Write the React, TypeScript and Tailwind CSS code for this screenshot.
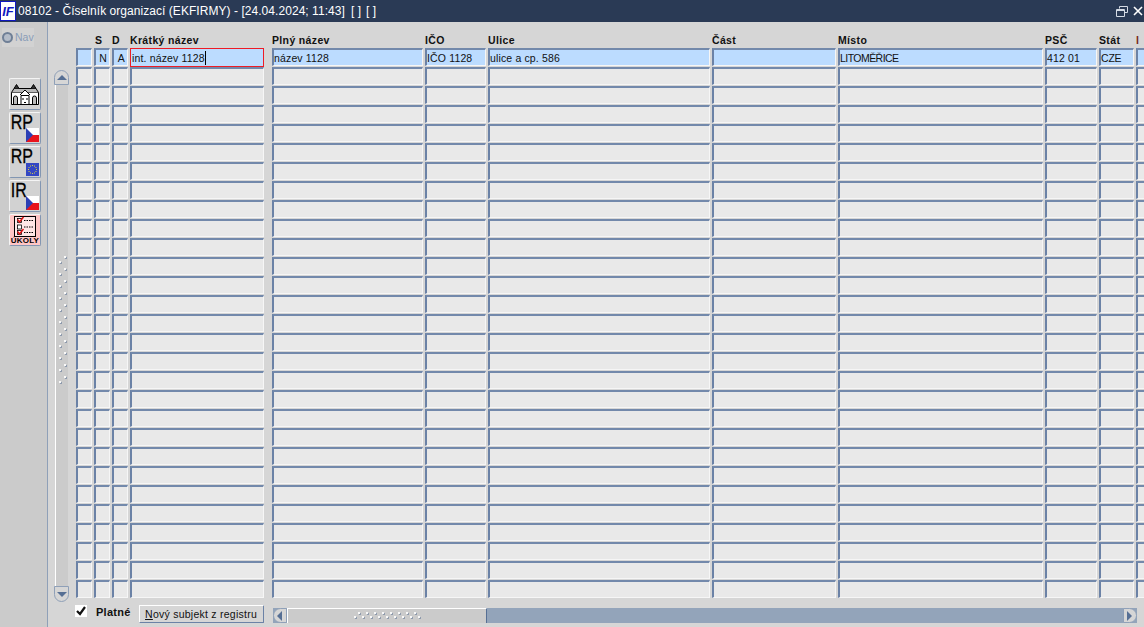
import type { ReactNode } from "react";

const COLS = [
  { w: "w-[16px]", label: "", first: "", cls: "" },
  { w: "w-[16px]", label: "S", first: "N", cls: "" },
  { w: "w-[16px]", label: "D", first: "A", cls: "" },
  { w: "w-[134px] mr-[6px]", label: "Krátký název", first: "int. název 1128", cls: "" },
  { w: "w-[151px]", label: "Plný název", first: "název 1128", cls: "" },
  { w: "w-[61px]", label: "IČO", first: "IČO 1128", cls: "" },
  { w: "w-[222px]", label: "Ulice", first: "ulice a cp. 586", cls: "" },
  { w: "w-[124px]", label: "Část", first: "", cls: "" },
  { w: "w-[205px]", label: "Místo", first: "LITOMĚŘICE", cls: "tracking-[-0.55px]" },
  { w: "w-[52px]", label: "PSČ", first: "412 01", cls: "" },
  { w: "w-[35px]", label: "Stát", first: "CZE", cls: "tracking-[-0.2px]" },
  { w: "w-[12px]", label: "I", first: "", cls: "" },
];

const ROWS = Array.from({ length: 29 }, (_, i) => i);

function FlagCz() {
  return (
    <svg width="13" height="14" viewBox="0 0 13 14" className="block">
      <rect width="13" height="7" fill="#ffffff" />
      <rect y="7" width="13" height="7" fill="#e8141c" />
      <polygon points="0,0 7,7 0,14" fill="#2b3fb5" />
    </svg>
  );
}

function FlagEu() {
  const stars = Array.from({ length: 12 }, (_, i) => {
    const a = (i * Math.PI) / 6;
    return { x: 6.5 + Math.cos(a) * 4, y: 6.5 + Math.sin(a) * 4 };
  });
  return (
    <svg width="13" height="13" viewBox="0 0 13 13" className="block">
      <rect width="13" height="13" fill="#3347c4" />
      {stars.map((s, i) => (
        <rect key={i} x={s.x - 0.5} y={s.y - 0.5} width="1" height="1" fill="#d8d040" />
      ))}
    </svg>
  );
}

function HouseIcon() {
  return (
    <svg width="30" height="24" viewBox="0 0 30 24" fill="none" stroke="#000" strokeWidth="1" className="block">
      <path d="M1.5 10.5h27v12h-27z" fill="#fff" />
      <path d="M1.5 10.5 4 6.5h22l2.5 4" fill="#b8b8b8" />
      <path d="M4 6.5 6.5 2.5 9 6.5M21 6.5 23.5 2.5 26 6.5" fill="#333" />
      <path d="M10 13 15 8l5 5" fill="#fff" />
      <path d="M11 13.5h8v9h-8z" fill="#fff" />
      <path d="M3.5 22v-6a2 2 0 0 1 4 0v6M22.5 22v-6a2 2 0 0 1 4 0v6" fill="#bbb" />
      <path d="M13 16v2M17 16v2M14 20.5h2" />
    </svg>
  );
}

function TasksIcon() {
  return (
    <svg width="22" height="21" viewBox="0 0 22 21" fill="none" className="block">
      <rect x="0.5" y="0.5" width="21" height="20" fill="#ffe6e6" stroke="#000" />
      {[3, 9.5, 15].map((y) => (
        <g key={y}>
          <rect x="3.5" y={y - 0.5} width="4" height="4" fill="#fff" stroke="#000" strokeWidth="0.8" />
          <path d={`M10 ${y + 1.5}h9`} stroke="#000" strokeDasharray="1.5 1" />
        </g>
      ))}
      <path d="M3.5 3.5l2 2.5 4-5M3.5 15.5l2 2.5 4-5" stroke="#e01010" strokeWidth="1.5" />
    </svg>
  );
}

function ToolButton({ children, pink }: { children: ReactNode; pink?: boolean }) {
  return (
    <div
      className={`relative h-[32px] w-[32px] overflow-hidden rounded-[2px] border border-t-[#f4f4f4] border-l-[#f4f4f4] border-r-[#8296b2] border-b-[#8296b2] ${
        pink ? "bg-[#ffc6c6]" : "bg-[#d2d2d2]"
      }`}
    >
      {children}
    </div>
  );
}

function LetterButton({ text, eu }: { text: string; eu?: boolean }) {
  return (
    <ToolButton>
      <span className="block origin-left scale-x-[0.8] pl-px text-[20px] leading-[19px] text-black [-webkit-text-stroke:0.3px_black]">
        {text}
      </span>
      <span className="absolute right-[1px] bottom-[1px]">{eu ? <FlagEu /> : <FlagCz />}</span>
    </ToolButton>
  );
}

function Grip({ dir }: { dir: "v" | "h" }) {
  const n = dir === "v" ? 11 : 9;
  const dots = Array.from({ length: n }, (_, i) => i);
  const w = dir === "v" ? 10 : 68;
  const h = dir === "v" ? 134 : 8;
  return (
    <svg width={w} height={h} viewBox={`0 0 ${w} ${h}`} className="block">
      {dots.map((i) => {
        const a = dir === "v" ? { x: 6, y: i * 12 } : { x: 5 + i * 8, y: 0 };
        const b = dir === "v" ? { x: 1, y: i * 12 + 5 } : { x: 1 + i * 8, y: 4 };
        return (
          <g key={i}>
            {[a, b].map((p, j) => (
              <g key={j}>
                <rect x={p.x + 1} y={p.y + 1} width="2" height="2" fill="#8f9bad" />
                <rect x={p.x} y={p.y} width="2" height="2" fill="#f8f8f8" />
              </g>
            ))}
          </g>
        );
      })}
    </svg>
  );
}

function Arrow({ dir }: { dir: "up" | "down" | "left" | "right" }) {
  const points = {
    up: "0,6 5,1 10,6",
    down: "0,1 10,1 5,6",
    left: "6,0 6,10 1,5",
    right: "1,0 1,10 6,5",
  }[dir];
  const size = dir === "up" || dir === "down" ? { w: 10, h: 7 } : { w: 7, h: 10 };
  return (
    <svg width={size.w} height={size.h} viewBox={`0 0 ${size.w} ${size.h}`} className="block">
      <polygon points={points} fill="#566f94" />
    </svg>
  );
}

function Cell({ w, children, selected, active, align }: { w: string; children?: ReactNode; selected?: boolean; active?: boolean; align?: boolean }) {
  const base = "flex shrink-0 items-center overflow-hidden text-[10.5px] tracking-[0.15px] text-[#111] whitespace-nowrap";
  const border = active
    ? "h-[19px] border border-[#ee1c25] pl-px"
    : "h-[18px] border-t-2 border-l-2 border-r border-b border-t-[#7389ab] border-l-[#6b82a6] border-r-[#f6f6f6] border-b-[#f6f6f6] pt-[2px]";
  const bg = selected ? "bg-[#bcdcff]" : "bg-[#e9e9e9]";
  return <div className={`${base} ${border} ${bg} ${w} ${align ? "justify-end pr-[2px]" : ""}`}>{children}</div>;
}

export default function App() {
  return (
    <div className="flex h-[627px] w-[1144px] flex-col overflow-hidden bg-[#d6d6d6] [font-family:'Liberation_Sans',sans-serif]">
      <header className="flex h-[22px] shrink-0 items-center bg-[#2a3a55] text-white">
        <div className="flex h-[20px] w-[16px] shrink-0 items-center justify-center border border-[#1018c0] bg-white text-[13px] leading-none font-bold text-[#1018c0] italic">
          IF
        </div>
        <span className="ml-[2px] text-[12px] tracking-[0.05px] whitespace-nowrap">
          08102 - Číselník organizací (EKFIRMY) - [24.04.2024; 11:43]
          <span className="ml-[6px]">[ ]</span>
          <span className="ml-[5px]">[ ]</span>
        </span>
        <div className="ml-auto flex items-center gap-[5px] pr-[1px]">
          <svg width="12" height="11" viewBox="0 0 12 11" fill="none" stroke="#d5dbe5" className="block">
            <path d="M3.5 2.5v-2h8v6h-3" />
            <path d="M.5 3.5h8v7h-8z" />
            <path d="M.5 4.5h8" />
          </svg>
          <svg width="10" height="10" viewBox="0 0 10 10" fill="none" stroke="#fff" strokeWidth="1.6" className="block">
            <path d="M1 1l8 8M9 1l-8 8" />
          </svg>
        </div>
      </header>
      <div className="flex min-h-0 flex-1">
        <aside className="w-[48px] shrink-0 border-r border-[#8fa0b8] bg-[#cbcbcb]">
          <div className="mt-[6px] ml-[2px] flex h-[19px] w-[32px] items-center gap-[2px] bg-[#d2d2d2]">
            <span className="h-[11px] w-[11px] rounded-full border-2 border-[#6f7f96] bg-[#b4bcc8]" />
            <span className="text-[10.5px] text-[#8a9db8]">Nav</span>
          </div>
          <div className="mt-[31px] ml-[9px] flex flex-col gap-[2px]">
            <ToolButton>
              <span className="flex h-full items-center justify-center">
                <HouseIcon />
              </span>
            </ToolButton>
            <LetterButton text="RP" />
            <LetterButton text="RP" eu />
            <LetterButton text="IR" />
            <ToolButton pink>
              <span className="flex flex-col items-center pt-[1px]">
                <TasksIcon />
                <span className="text-[8px] leading-[7px] font-bold tracking-[0.2px] text-black">ÚKOLY</span>
              </span>
            </ToolButton>
          </div>
        </aside>
        <main className="flex min-w-0 flex-1 flex-col">
          <div className="mt-[11px] ml-[28px] flex h-[15px] shrink-0 gap-[2px]">
            {COLS.map((c, i) => (
              <div
                key={i}
                className={`${c.w} shrink-0 overflow-hidden text-[10.5px] leading-[14px] font-bold tracking-[0.35px] whitespace-nowrap ${
                  i === 1 ? "pl-px" : ""
                } ${i === 11 ? "text-[#7a2c1c]" : "text-[#111]"}`}
              >
                {c.label}
              </div>
            ))}
          </div>
          <div className="flex">
            <div className="mt-[22px] ml-[6px] flex h-[532px] w-[15px] shrink-0 flex-col">
              <div className="flex h-[15px] shrink-0 items-center justify-center rounded-t-[8px] border border-[#8fa0b8] bg-[#d6d6d6]">
                <Arrow dir="up" />
              </div>
              <div className="mx-px flex flex-1 items-center justify-center border-l border-white bg-[#cbcbcb] pb-[26px] pl-[2px]">
                <Grip dir="v" />
              </div>
              <div className="flex h-[16px] shrink-0 items-center justify-center rounded-b-[8px] border border-[#8fa0b8] bg-[#d6d6d6]">
                <Arrow dir="down" />
              </div>
            </div>
            <div className="ml-[7px] flex flex-col gap-y-px">
              {ROWS.map((r) => (
                <div key={r} className="flex h-[18px] items-start gap-[2px]">
                  {COLS.map((c, i) => (
                    <Cell key={i} w={c.w} selected={r === 0} active={r === 0 && i === 3} align={i === 1 || i === 2}>
                      {r === 0 && c.first && (
                        <span className={i === 3 ? "border-r border-black leading-[14px]" : c.cls}>{c.first}</span>
                      )}
                    </Cell>
                  ))}
                </div>
              ))}
            </div>
          </div>
          <div className="mt-[3px] ml-[27px] flex h-[18px] items-start">
            <div className="flex h-[12px] w-[12px] shrink-0 items-center justify-center bg-white">
              <svg width="10" height="10" viewBox="0 0 10 10" fill="none" stroke="#111" strokeWidth="2.2" className="block">
                <path d="M1 5l3 3 5-7" />
              </svg>
            </div>
            <span className="ml-[9px] text-[11px] leading-[14px] font-bold tracking-[0.25px] text-[#111]">Platné</span>
            <button className="ml-[8px] h-[18px] w-[125px] rounded-[1px] border border-t-white border-l-white border-r-[#6b82a6] border-b-[#6b82a6] bg-[#d6d6d6] text-[10.5px] leading-[14px] tracking-[0.25px] text-[#111]">
              <span className="underline">N</span>ový subjekt z registru
            </button>
            <div className="mt-[3px] ml-[9px] flex h-[15px] w-[864px] bg-[#93a4ba]">
              <div className="flex w-[14px] shrink-0 items-center justify-center rounded-l-[8px] border border-[#8fa0b8] bg-[#d6d6d6]">
                <Arrow dir="left" />
              </div>
              <div className="flex w-[200px] shrink-0 items-center justify-center border-t border-l border-r border-white border-r-[#566f94] bg-[#cbcbcb]">
                <Grip dir="h" />
              </div>
              <div className="ml-auto flex w-[14px] shrink-0 items-center justify-center rounded-r-[8px] border border-[#8fa0b8] bg-[#d6d6d6]">
                <Arrow dir="right" />
              </div>
            </div>
          </div>
        </main>
      </div>
    </div>
  );
}
